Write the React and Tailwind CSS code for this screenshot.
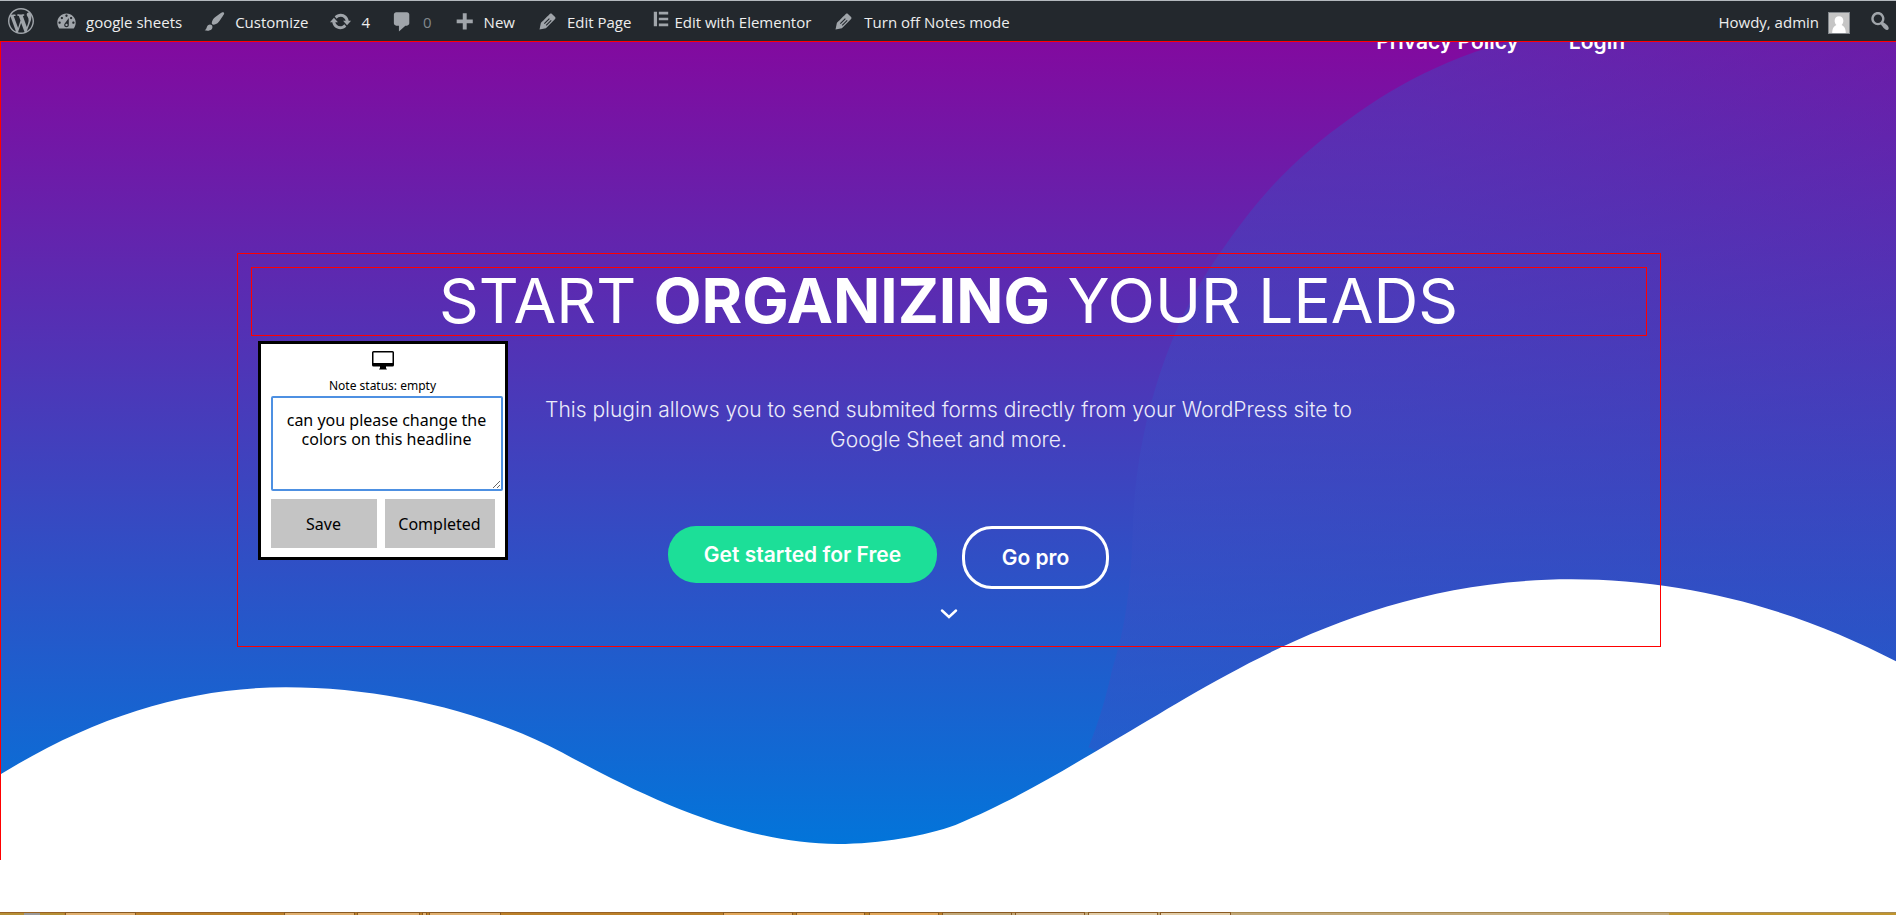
const ICONS = {
  wordpress:
    'M20 10c0-5.51-4.49-10-10-10C4.48 0 0 4.49 0 10c0 5.52 4.48 10 10 10 5.51 0 10-4.48 10-10zM7.78 15.37L4.37 6.22c.55-.02 1.17-.08 1.17-.08.5-.06.44-1.13-.06-1.11 0 0-1.45.11-2.37.11-.18 0-.37 0-.58-.01C4.12 2.69 6.87 1.11 10 1.11c2.33 0 4.45.87 6.05 2.34-.68-.11-1.65.39-1.65 1.58 0 .74.45 1.36.9 2.1.35.61.55 1.36.55 2.46 0 1.49-1.4 5-1.4 5l-3.03-8.37c.54-.02.82-.17.82-.17.5-.05.44-1.25-.06-1.22 0 0-1.44.12-2.38.12-.87 0-2.33-.12-2.33-.12-.5-.03-.56 1.2-.06 1.22l.92.08 1.26 3.41zM17.41 10c.24-.64.74-1.87.43-4.25.7 1.29 1.05 2.71 1.05 4.25 0 3.29-1.73 6.24-4.4 7.78.97-2.59 1.94-5.2 2.92-7.78zM6.1 18.09C3.12 16.65 1.11 13.53 1.11 10c0-1.3.23-2.48.72-3.59C3.25 10.3 4.67 14.2 6.1 18.09zm4.03-6.63l2.58 6.98c-.86.29-1.76.45-2.71.45-.79 0-1.57-.11-2.29-.33.81-2.38 1.62-4.74 2.42-7.1z',
  dashboard:
    'M3.76 16h12.48c1.1-1.37 1.76-3.11 1.76-5 0-4.42-3.58-8-8-8s-8 3.58-8 8c0 1.89.66 3.63 1.76 5zM10 4c.55 0 1 .45 1 1s-.45 1-1 1-1-.45-1-1 .45-1 1-1zM6 6c.55 0 1 .45 1 1s-.45 1-1 1-1-.45-1-1 .45-1 1-1zm8 0c.55 0 1 .45 1 1s-.45 1-1 1-1-.45-1-1 .45-1 1-1zm-5.37 5.55L12 7v6c0 1.1-.9 2-2 2s-2-.9-2-2c0-.57.24-1.08.63-1.45zM4 10c.55 0 1 .45 1 1s-.45 1-1 1-1-.45-1-1 .45-1 1-1zm12 0c.55 0 1 .45 1 1s-.45 1-1 1-1-.45-1-1 .45-1 1-1zm-5 3c0-.55-.45-1-1-1s-1 .45-1 1 .45 1 1 1 1-.45 1-1z',
  brush:
    'M18.33 3.57s.27-.8-.31-1.36c-.53-.52-1.22-.24-1.22-.24-.61.3-5.76 3.47-7.67 5.57-.86.96-2.06 3.79-1.09 4.82.92.98 3.96-.17 4.79-1 2.06-2.06 5.21-7.17 5.5-7.79zM1.4 17.65c2.37-1.56 1.46-3.41 3.23-4.64.93-.65 2.22-.62 3.08.29.63.67.8 2.57-.16 3.46-1.57 1.45-4 1.55-6.15.89z',
  update:
    'M10.2 3.28c3.53 0 6.43 2.61 6.92 6h2.08l-3.5 4-3.5-4h2.32c-.45-1.97-2.21-3.45-4.32-3.45-1.45 0-2.73.71-3.54 1.78L4.95 5.66C6.23 4.2 8.11 3.28 10.2 3.28zm-.4 13.44c-3.52 0-6.43-2.61-6.92-6H.8l3.5-4c1.17 1.33 2.33 2.67 3.5 4H5.48c.45 1.97 2.21 3.45 4.32 3.45 1.45 0 2.73-.71 3.54-1.78l1.71 1.95c-1.28 1.46-3.15 2.38-5.25 2.38z',
  comment:
    'M4.5 2h9.4c1.1 0 2 .9 2 2v7.6c0 1.1-.9 2-2 2h-1.4L6.9 18.8v-5.200H4.500c-1.100 0-2-.9-2-2V4c0-1.100.9-2 2-2z',
  plus: 'M17.200 8.200v3.400h-5.300v5.400H8.500v-5.400H3.200V8.200h5.300V2.900h3.400v5.300z',
  edit:
    'M13.89 3.39l2.71 2.72c.46.46.42 1.24.03 1.64l-8.01 8.02-5.56 1.16 1.16-5.58s7.6-7.63 7.99-8.03c.39-.39 1.22-.39 1.68.07zM11.3 7.1L6.9 11.5l.7.7L12 7.8zM12.9 8.7L8.5 13.1l.7.7 4.4-4.4z',
  elementor: 'M2 2h3.600v16H2zM7.600 2H18v3H7.600zM7.600 8.500H18v3H7.600zM7.600 15H18v3H7.600z',
  search:
    'M12.14 4.18c1.87 1.87 2.11 4.75.72 6.89.12.1.22.21.36.31.2.16.47.36.81.59.34.24.56.39.66.47.42.31.73.57.94.78.32.32.6.65.84 1 .25.35.44.69.59 1.04.14.35.21.68.18 1-.02.32-.14.59-.36.81s-.49.34-.81.36c-.31.02-.65-.04-.99-.19-.35-.14-.7-.34-1.04-.59-.35-.24-.68-.52-1-.84-.21-.21-.47-.52-.77-.93-.1-.13-.25-.35-.47-.66-.22-.32-.4-.57-.56-.78-.16-.2-.29-.35-.44-.5-2.07 1.09-4.69.76-6.44-.98-2.14-2.15-2.14-5.64 0-7.78 2.15-2.15 5.63-2.15 7.78 0zm-1.41 6.36c1.36-1.37 1.36-3.58 0-4.95-1.37-1.37-3.59-1.37-4.95 0-1.37 1.37-1.37 3.58 0 4.95 1.36 1.37 3.58 1.37 4.95 0z',
};

function Dashicon({ name, className }) {
  return (
    <svg viewBox="0 0 20 20" className={`shrink-0 fill-[#a0a5aa] ${className}`} aria-hidden="true">
      <path fillRule="evenodd" d={ICONS[name]} />
    </svg>
  );
}

function BarLink({ icon, iconClass = 'size-[23px]', className = 'gap-2', children, label }) {
  return (
    <a href="#" aria-label={label} className={`flex h-full items-center ${className}`}>
      <Dashicon name={icon} className={iconClass} />
      {children && <span className="pt-0.5 leading-5">{children}</span>}
    </a>
  );
}

function AdminBar() {
  return (
    <header className="relative z-10 flex h-[41px] items-center justify-between border-t border-[#b4b9be] bg-[#23282d] pr-1 pl-2 font-['Open_Sans','Noto_Sans',sans-serif] text-[15px] whitespace-nowrap text-[#eeeeee]">
      <nav className="flex h-full items-center gap-[21px]" aria-label="Toolbar">
        <BarLink icon="wordpress" iconClass="size-[26px]" label="About WordPress" />
        <BarLink icon="dashboard">google sheets</BarLink>
        <BarLink icon="brush" className="gap-[9px]">Customize</BarLink>
        <BarLink icon="update" className="gap-[9px]">4</BarLink>
        <BarLink icon="comment" className="gap-[9px] text-[#82878c]">0</BarLink>
        <BarLink icon="plus">New</BarLink>
        <BarLink icon="edit">Edit Page</BarLink>
        <BarLink icon="elementor" iconClass="size-[18px] mb-1" className="gap-1">Edit with Elementor</BarLink>
        <BarLink icon="edit" className="gap-[9px]">Turn off Notes mode</BarLink>
      </nav>
      <div className="flex h-full items-center gap-[18px]">
        <a href="#" className="flex items-center gap-[9px]">
          <span className="pt-0.5 leading-5">Howdy, admin</span>
          <svg viewBox="0 0 22 22" className="mt-1 size-[22px] border border-[#82878c] bg-[#c5c5c5]" aria-hidden="true">
            <path fill="#fff" d="M11 3.500c3 0 4.800 2.200 4.800 5 0 2-.8 3.600-2 4.700 2.600.9 4.500 3.600 4.700 8.800h-15c.2-5.200 2.100-7.900 4.700-8.800-1.200-1.100-2-2.700-2-4.700 0-2.800 1.800-5 4.800-5z" />
          </svg>
        </a>
        <button type="button" aria-label="Search">
          <Dashicon name="search" className="size-6" />
        </button>
      </div>
    </header>
  );
}

function HeroBackdrop() {
  return (
    <svg
      viewBox="0 0 1896 819"
      preserveAspectRatio="none"
      className="absolute inset-0 h-full w-full"
      aria-hidden="true"
    >
      <defs>
        <linearGradient id="blob" x1="0" y1="0" x2="1" y2="0">
          <stop offset="0" stopColor="#3b4fc4" stopOpacity="0.400" />
          <stop offset="0.400" stopColor="#3b4bc1" stopOpacity="0.450" />
          <stop offset="1" stopColor="#3b45bd" stopOpacity="0.300" />
        </linearGradient>
      </defs>
      <path
        fill="url(#blob)"
        d="M1896 0H1506C1420 25 1370 60 1320 99C1270 140 1245 175 1217 215C1165 290 1134 390 1132 497C1130 550 1124 590 1112 627C1106 655 1098 682 1088 706L1300 819H1896z"
      />
      <path
        fill="#fff"
        d="M0 733C95 674 190 646 285 646C385 646 485 671 561 711C640 754 740 803 837 803C880 803 925 795 955 784C1020 756 1060 731 1114 699C1215 641 1360 538 1571 538C1690 538 1800 570 1896 620V819H0z"
      />
    </svg>
  );
}

function NoteCard() {
  return (
    <form
      className="absolute top-[74px] left-[7px] w-[250px] border-3 border-black bg-white px-[10px] pt-[7px] pb-[9px] text-center font-['Noto_Sans',sans-serif] text-black"
      onSubmit={(event) => event.preventDefault()}
    >
      <svg viewBox="0 0 22 19" className="mx-auto h-[19px] w-[22px]" aria-hidden="true">
        <path
          fillRule="evenodd"
          d="M1.500 0h19A1.500 1.500 0 0 1 22 1.500v12.500a1.500 1.500 0 0 1-1.500 1.500H14v1.500l1 1.500H7l1-1.500v-1.500H1.500A1.500 1.500 0 0 1 0 14V1.500A1.500 1.500 0 0 1 1.500 0zM1.500 1.500v10.500h19V1.500z"
        />
      </svg>
      <label htmlFor="note" className="mt-[6px] block text-[12px] leading-5">
        Note status: empty
      </label>
      <textarea
        id="note"
        defaultValue="can you please change the colors on this headline"
        className="block h-[95px] w-[232px] rounded-xs border-2 border-[#4d90e2] bg-white px-3 py-[13px] text-center text-[16px] leading-[19px] outline-none"
      />
      <div className="mt-2 flex gap-2">
        <button type="submit" className="h-[49px] w-[106px] bg-[#c4c4c4] text-[16px]">
          Save
        </button>
        <button type="button" className="h-[49px] w-[110px] bg-[#c4c4c4] text-[16px]">
          Completed
        </button>
      </div>
    </form>
  );
}

function Hero() {
  return (
    <section className="relative h-[819px] overflow-hidden border-t border-l border-[#ff0000] bg-linear-to-b/srgb from-[#820a9f] to-[#0077db] font-['Inter','Open_Sans',sans-serif] text-white">
      <HeroBackdrop />
      <div className="relative">
        <nav className="-mt-3 flex h-6 justify-end gap-[50px] pr-[271px] text-[21px] leading-6 font-semibold" aria-label="Site">
          <a href="#">Privacy Policy</a>
          <a href="#">Login</a>
        </nav>
        <div className="mx-auto mt-[199px] h-[394px] w-full max-w-[1424px] border border-[#ff0000] px-[13px] pt-[13px]">
          <div className="relative">
            <h1 className="h-[69px] border border-[#ff0000] text-center text-[62px] leading-[66px] whitespace-nowrap">
              START <strong className="font-bold">ORGANIZING</strong> YOUR LEADS
            </h1>
            <p className="mx-auto mt-[59px] max-w-[830px] text-center text-[21px] leading-[30px] font-light text-[#ecebf9]">
              This plugin allows you to send submited forms directly from your WordPress site to Google Sheet and more.
            </p>
            <div className="mt-[71px] flex items-start justify-center gap-[25px] pr-[120px] text-[21px] leading-6 font-semibold">
              <a href="#" className="flex h-[57px] w-[269px] items-center justify-center rounded-[28px] bg-[#1cdf98]">
                Get started for Free
              </a>
              <a href="#" className="flex h-[63px] w-[147px] items-center justify-center rounded-[30px] border-3 border-white">
                Go pro
              </a>
            </div>
            <svg viewBox="0 0 18 10" className="mx-auto mt-5 h-[10px] w-[18px]" aria-hidden="true">
              <path d="M2 1.500L9 8L16 1.500" fill="none" stroke="#fff" strokeWidth="2.400" strokeLinecap="round" />
            </svg>
            <NoteCard />
          </div>
        </div>
      </div>
    </section>
  );
}

const TILES = [
  [65, 71, '#e0b070'],
  [284, 71, '#e0b070'],
  [357, 63, '#e0b070'],
  [422, 5, '#e0b070'],
  [429, 72, '#e0b070'],
  [723, 70, '#e2a85c'],
  [796, 69, '#e2a85c'],
  [869, 70, '#e2a85c'],
  [942, 70, '#c2a878'],
  [1015, 70, '#d0b48a'],
  [1088, 70, '#e2cda8'],
  [1160, 71, '#e2cda8'],
];

function FooterStrip() {
  return (
    <svg viewBox="0 0 1896 3" preserveAspectRatio="none" className="block h-[3px] w-full" aria-hidden="true">
      <rect width="1896" height="3" fill="#bb8029" />
      <rect width="64" height="3" fill="#b58f36" />
      <rect x="942" width="727" height="3" fill="#c2a878" />
      <rect x="1669" width="227" height="3" fill="#c0952f" />
      <rect width="1058" height="1" fill="#996224" />
      <rect x="1058" width="838" height="1" fill="#a98a50" />
      <rect x="24" y="1" width="16" height="2" fill="#9a9a9a" />
      {TILES.map(([x, width, fill]) => (
        <g key={x}>
          <rect x={x} width={width} height="3" fill="#8a5a22" />
          <rect x={x + 1} y="1" width={width - 2} height="2" fill={fill} />
        </g>
      ))}
    </svg>
  );
}

export default function App() {
  return (
    <div className="flex min-h-screen flex-col overflow-x-hidden bg-white">
      <AdminBar />
      <main className="flex-1">
        <Hero />
      </main>
      <FooterStrip />
    </div>
  );
}
